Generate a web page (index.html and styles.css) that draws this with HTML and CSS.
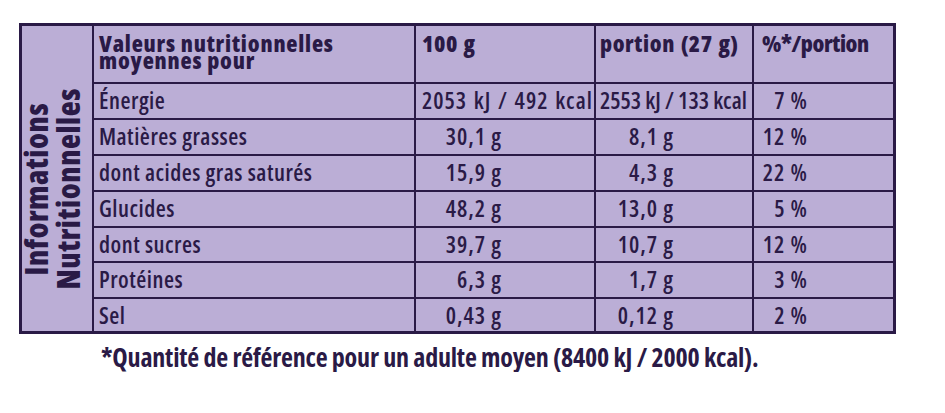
FILE: index.html
```html
<!DOCTYPE html>
<html lang="fr">
<head>
<meta charset="utf-8">
<title>Informations Nutritionnelles</title>
<link rel="stylesheet" href="styles.css">
</head>
<body>
<div class="page">
  <div class="table">
    <div class="cell side"><div class="side-text">Informations<br>Nutritionnelles</div></div>

    <div class="cell head label">Valeurs nutritionnelles<br>moyennes pour</div>
    <div class="cell head c3">100 g</div>
    <div class="cell head c4">portion (27 g)</div>
    <div class="cell head c5">%*/portion</div>

    <div class="cell label">Énergie</div>
    <div class="cell c3 wide">2053 kJ / 492 kcal</div>
    <div class="cell c4 tight">2553 kJ / 133 kcal</div>
    <div class="cell pct">7 %</div>

    <div class="cell label">Matières grasses</div>
    <div class="cell num3">30,1 g</div>
    <div class="cell num4">8,1 g</div>
    <div class="cell pct">12 %</div>

    <div class="cell label">dont acides gras saturés</div>
    <div class="cell num3">15,9 g</div>
    <div class="cell num4">4,3 g</div>
    <div class="cell pct">22 %</div>

    <div class="cell label">Glucides</div>
    <div class="cell num3">48,2 g</div>
    <div class="cell num4">13,0 g</div>
    <div class="cell pct">5 %</div>

    <div class="cell label">dont sucres</div>
    <div class="cell num3">39,7 g</div>
    <div class="cell num4">10,7 g</div>
    <div class="cell pct">12 %</div>

    <div class="cell label">Protéines</div>
    <div class="cell num3">6,3 g</div>
    <div class="cell num4">1,7 g</div>
    <div class="cell pct">3 %</div>

    <div class="cell label">Sel</div>
    <div class="cell num3">0,43 g</div>
    <div class="cell num4">0,12 g</div>
    <div class="cell pct">2 %</div>
  </div>
  <p class="note">*Quantité de référence pour un adulte moyen (8400 kJ / 2000 kcal).</p>
</div>
</body>
</html>
```
FILE: styles.css
```css
html, body {
  margin: 0;
  padding: 0;
  background: #ffffff;
}

body {
  font-family: "Open Sans", "Liberation Sans", sans-serif;
  font-stretch: 75%;
  color: #2a1a46;
}

.page {
  padding: 23px 0 0 19px;
}

.table {
  display: grid;
  width: fit-content;
  grid-template-columns: 70px 320px 178px 156px 139px;
  grid-template-rows: 56px 34px 34px 34px 34px 33px 34px 32px;
  gap: 2px;
  border: 3px solid #2a1a46;
  background: #2a1a46;
}

.cell {
  background: #bbaed6;
  font-size: 23px;
  font-weight: 600;
  line-height: 33px;
  white-space: nowrap;
}

.side {
  grid-row: 1 / -1;
  display: flex;
  align-items: center;
  justify-content: center;
  padding: 20px 11px 0 0;
  overflow: visible;
}

.side-text {
  writing-mode: vertical-rl;
  transform: rotate(180deg);
  font-size: 31px;
  font-weight: 800;
  letter-spacing: 0.5px;
  line-height: 32px;
  text-align: center;
}

.head {
  font-weight: 800;
  line-height: 17px;
  padding-top: 9px;
  letter-spacing: 0.6px;
  word-spacing: 1px;
}

.head.c5 {
  letter-spacing: -0.4px;
}

.label {
  padding-left: 5px;
  letter-spacing: 0.5px;
}

.head.label {
  letter-spacing: 0.8px;
  word-spacing: 0;
}

.c3 {
  padding-left: 6px;
}

.c4 {
  padding-left: 4px;
}

.c5 {
  padding-left: 8px;
}

.wide {
  letter-spacing: 1px;
  word-spacing: 1.5px;
}

.tight {
  letter-spacing: 0;
}

.num3,
.num4,
.pct {
  text-align: right;
  letter-spacing: 1px;
}

.num3 {
  padding-right: 92px;
}

.num4 {
  padding-right: 78px;
}

.pct {
  padding-right: 85px;
}

.note {
  margin: 8px 0 0 82px;
  font-size: 26px;
  font-weight: 700;
  letter-spacing: -0.2px;
  line-height: 30px;
}
```
